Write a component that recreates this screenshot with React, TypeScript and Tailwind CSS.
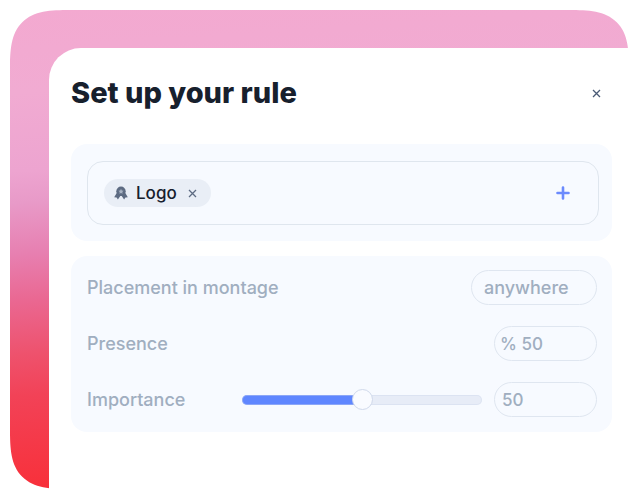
import React, { useState } from "react";

interface IRowProps {
  label: string;
  htmlFor: string;
  children: React.ReactNode;
}

const field =
  "h-[35px] rounded-full border border-[#dfe6f0] bg-transparent font-medium text-[#a0aec0] outline-none";

function CrossIcon() {
  return (
    <svg viewBox="0 0 9 9" className="size-[9px]" fill="none" stroke="currentColor" strokeWidth="1.3">
      <path d="M1 1 8 8M8 1 1 8" />
    </svg>
  );
}

function BadgeIcon() {
  return (
    <svg viewBox="0 0 14 14" className="size-[14px]" fill="#5d6b82">
      <path d="M3 6.5 0.2 11.2 2.6 11.4 3.9 13.5 6.3 9.9H7.7L10.1 13.5 11.4 11.4 13.8 11.2 11 6.5Z" />
      <circle cx="7" cy="5.3" r="4.7" />
      <path
        fill="#a9b4c4"
        d="m7 2.8.8 1.6 1.8.3-1.3 1.3.3 1.8L7 7l-1.6.8.3-1.8-1.3-1.3 1.8-.3Z"
      />
    </svg>
  );
}

function Row({ label, htmlFor, children }: IRowProps) {
  return (
    <div className="flex items-center justify-between">
      <label htmlFor={htmlFor} className="text-lg leading-7 font-medium text-[#a0aec0]">
        {label}
      </label>
      <div className="flex items-center gap-3">{children}</div>
    </div>
  );
}

function App() {
  const [presence, setPresence] = useState("% 50");
  const [importance, setImportance] = useState(50);

  return (
    <div className="flex min-h-screen bg-white p-[10px] pr-[11px] pb-[11px] font-['Inter',sans-serif]">
      <div className="flex flex-1 rounded-[60px] bg-[linear-gradient(176deg,#f3a9d0_0%,#f1abd2_16%,#eda4d0_31%,#e89ac8_37%,#e77fb0_47%,#ea6791_56%,#ee526d_66%,#f24257_74%,#f8303a_92%)] pt-[38px] pl-[39px] [corner-shape:superellipse(1.6)]">
        <main className="flex-1 rounded-tl-[32px] bg-white pt-[25px] pr-[17px] pb-14 pl-[22px]">
          <header className="mb-[31px] flex items-center justify-between pr-[11px]">
            <h1 className="text-[29px] leading-10 font-extrabold text-[#17202d]">Set up your rule</h1>
            <button type="button" aria-label="Close" className="text-[#4a5a75]">
              <CrossIcon />
            </button>
          </header>

          <section className="mb-[15px] rounded-2xl bg-[#f7faff] pt-[17px] pr-[13px] pb-4 pl-4">
            <div className="flex h-16 items-center justify-between rounded-2xl border border-[#dfe6ee] px-4">
              <div className="flex h-7 items-center rounded-full bg-[#e9eef6] pr-[14px] pl-[10px] text-[17px] leading-7 font-medium text-[#17202d]">
                <BadgeIcon />
                <span className="mr-[11px] ml-2">Logo</span>
                <button type="button" aria-label="Remove Logo" className="text-[#5d6b82]">
                  <CrossIcon />
                </button>
              </div>
              <button type="button" aria-label="Add" className="mr-3 text-[#6b8afd]">
                <svg viewBox="0 0 14 14" className="size-[14px]" stroke="currentColor" strokeWidth="2.6" strokeLinecap="round">
                  <path d="M7 1.5v11M1.5 7h11" />
                </svg>
              </button>
            </div>
          </section>

          <section className="flex flex-col gap-[21px] rounded-2xl bg-[#f7faff] pt-[14px] pr-[15px] pb-[15px] pl-4">
            <Row label="Placement in montage" htmlFor="placement">
              <select id="placement" className={`${field} w-[126px] appearance-none pl-3 text-lg`}>
                <option>anywhere</option>
              </select>
            </Row>
            <Row label="Presence" htmlFor="presence">
              <input
                id="presence"
                className={`${field} w-[103px] pl-[5px] text-[17px]`}
                value={presence}
                onChange={(e) => setPresence(e.target.value)}
              />
            </Row>
            <Row label="Importance" htmlFor="importance">
              <input
                id="importance"
                type="range"
                value={importance}
                onChange={(e) => setImportance(Number(e.target.value))}
                className="h-[22px] w-60 appearance-none bg-transparent [&::-webkit-slider-runnable-track]:h-[10px] [&::-webkit-slider-runnable-track]:rounded-full [&::-webkit-slider-runnable-track]:bg-(image:--fill) [&::-webkit-slider-runnable-track]:shadow-[inset_0_0_0_1px_#cdd6ea66] [&::-webkit-slider-thumb]:-mt-[6px] [&::-webkit-slider-thumb]:size-[21px] [&::-webkit-slider-thumb]:appearance-none [&::-webkit-slider-thumb]:rounded-full [&::-webkit-slider-thumb]:border [&::-webkit-slider-thumb]:border-[#d0d9eb] [&::-webkit-slider-thumb]:bg-[#f9fbff]"
                style={
                  {
                    "--fill": `linear-gradient(to right, #5f86ff ${importance}%, #e7ecf7 ${importance}%)`,
                  } as React.CSSProperties
                }
              />
              <input
                aria-label="Importance value"
                className={`${field} w-[103px] pl-[7px] text-[17px]`}
                value={importance}
                onChange={(e) => setImportance(Number(e.target.value) || 0)}
              />
            </Row>
          </section>
        </main>
      </div>
    </div>
  );
}

export default App;
